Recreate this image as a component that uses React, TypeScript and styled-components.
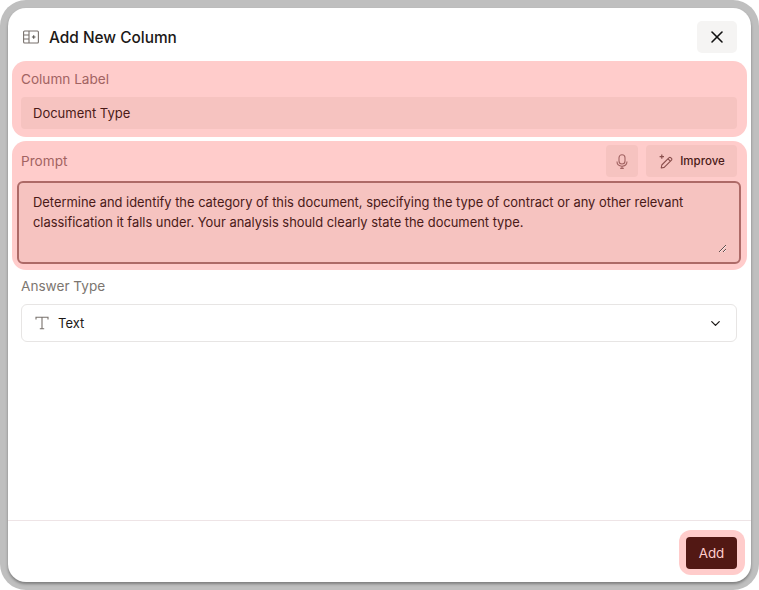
import React from "react";
import styled, { createGlobalStyle } from "styled-components";
import { X, ChevronDown } from "lucide-react";

const Global = createGlobalStyle`
  html, body { margin: 0; padding: 0; background: #fff; }
  * { box-sizing: border-box; }
  body { font-family: Inter, "Liberation Sans", sans-serif; }
`;

const Frame = styled.div`
  width: 759px;
  height: 590px;
  padding: 8px;
  border-radius: 26px;
  background: #bfbfbf;
`;

const Dialog = styled.div`
  height: 574px;
  background: #fff;
  border-radius: 18px;
  display: flex;
  flex-direction: column;
  box-shadow: 0 2px 3px rgba(0, 0, 0, 0.35);
`;

const Header = styled.header`
  height: 53px;
  padding: 13px 14px 0 15px;
  display: flex;
  align-items: flex-start;
  justify-content: space-between;
`;

const Title = styled.div`
  display: flex;
  align-items: center;
  gap: 10px;
  height: 32px;
  font-size: 15.4px;
  font-weight: 500;
  color: #1c1917;
`;

const CloseButton = styled.button`
  width: 40px;
  height: 32px;
  border: 0;
  border-radius: 5px;
  background: #f5f4f3;
  color: #111;
  display: flex;
  align-items: center;
  justify-content: center;
  padding: 0;
`;

const Body = styled.div`
  flex: 1;
  padding: 0 4px;
  display: flex;
  flex-direction: column;
  gap: 4px;
`;

const Highlight = styled.section`
  background: #ffcccb;
  border-radius: 14px;
  padding: 0 10px 0 9px;
  display: flex;
  flex-direction: column;
`;

const LabelSection = styled(Highlight)`
  height: 76px;
`;

const PromptSection = styled(Highlight)`
  height: 129px;
  padding: 4px 6px 0 5px;
`;

const Label = styled.label<{ $onHighlight?: boolean }>`
  display: block;
  font-size: 13.6px;
  line-height: 18px;
  color: ${(p) => (p.$onHighlight ? "#a26362" : "#7c7670")};
`;

const LabelRow = styled.div`
  height: 36px;
  display: flex;
  align-items: center;
`;

const TextInput = styled.input`
  height: 32px;
  width: 100%;
  border: 0;
  border-radius: 4px;
  background: #f6c3c0;
  padding: 0 12px;
  font: 400 13px Inter, sans-serif;
  color: #4a1a18;
  outline: none;
`;

const PromptHead = styled.div`
  height: 32px;
  padding: 0 4px 0 4px;
  display: flex;
  align-items: center;
  gap: 8px;
  margin-bottom: 4px;
`;

const Spacer = styled.div`
  flex: 1;
`;

const ToolButton = styled.button<{ $wide?: boolean }>`
  height: 32px;
  width: ${(p) => (p.$wide ? "91px" : "32px")};
  border: 0;
  border-radius: 4px;
  background: #f6c3c0;
  color: #4a1a18;
  padding: ${(p) => (p.$wide ? "0 0 0 1px" : "0")};
  display: flex;
  align-items: center;
  justify-content: center;
  gap: 6px;
  font: 500 11.5px Inter, sans-serif;
`;

const PromptBox = styled.div`
  height: 83px;
  border: 2px solid #ad6a67;
  border-radius: 6px;
  background: #f6c3c0;
  display: flex;
`;

const PromptArea = styled.textarea`
  flex: 1;
  margin: 10px 12px 9px 14px;
  border: 0;
  padding: 0;
  background: transparent;
  font: 400 12.9px/20px Inter, sans-serif;
  color: #4a1a18;
  outline: none;
  resize: vertical;
`;

const AnswerField = styled.div`
  padding: 3px 10px 0 9px;
  display: flex;
  flex-direction: column;
  gap: 9px;
`;

const SelectBox = styled.button`
  height: 38px;
  width: 100%;
  border: 1px solid #e7e5e4;
  border-radius: 6px;
  background: #fff;
  padding: 0 13px;
  display: flex;
  align-items: center;
  gap: 9px;
  font: 400 13px Inter, sans-serif;
  color: #1c1917;
  text-align: left;
`;

const SelectText = styled.span`
  flex: 1;
`;

const Footer = styled.footer`
  height: 62px;
  border-top: 1px solid #eee4e6;
  padding: 9px 6px 0 0;
  display: flex;
  justify-content: flex-end;
  align-items: flex-start;
`;

const AddHalo = styled.div`
  background: #ffcccb;
  border-radius: 12px;
  padding: 7px 8px 6px 7px;
`;

const AddButton = styled.button`
  display: block;
  width: 51px;
  height: 32px;
  border: 0;
  border-radius: 4px;
  background: #521814;
  color: #ffcccb;
  font: 400 13.4px Inter, sans-serif;
  padding: 0;
`;

const AddColumnIcon = () => (
  <svg width="16" height="14" viewBox="0 0 16 14" fill="none" stroke="#78716c" strokeWidth="1.1">
    <rect x="0.6" y="1" width="14.8" height="12" rx="1" />
    <path d="M6 1v12M0.6 5h5.4M0.6 9h5.4" />
    <path d="M10.7 5.2v3.6M8.9 7h3.6" stroke="#57534e" />
  </svg>
);

const MicIcon = () => (
  <svg width="12" height="15" viewBox="0 0 12 15" fill="none" stroke="#a26362" strokeWidth="1.1">
    <rect x="3" y="0.8" width="6" height="9.2" rx="3" />
    <path d="M1 7.6c0 3 2.2 4.6 5 4.6s5-1.6 5-4.6M6 12.2v2.2M4.2 14.4h3.6" />
  </svg>
);

const WandIcon = () => (
  <svg width="15" height="15" viewBox="0 0 15 15" fill="none" stroke="#8a4f4d" strokeWidth="1.1" strokeLinejoin="round">
    <path d="M2.2 14l.6-3 7.3-7.3a1.1 1.1 0 0 1 1.6 0l.8.8a1.1 1.1 0 0 1 0 1.6L5.2 13.4z" />
    <path d="M9 4.8l2.4 2.4" />
    <path d="M2.8.4v4.4M.6 2.6h4.4" strokeWidth="1.2" />
  </svg>
);

const SerifT = () => (
  <svg width="14" height="14" viewBox="0 0 14 14" fill="none" stroke="#78716c" strokeWidth="1.1">
    <path d="M1 3.4V1.2h12v2.2M7 1.2v11.6M4.8 12.8h4.4" />
  </svg>
);

export default function App() {
  return (
    <>
      <Global />
      <Frame>
        <Dialog>
          <Header>
            <Title>
              <AddColumnIcon />
              Add New Column
            </Title>
            <CloseButton aria-label="Close">
              <X size={20} strokeWidth={1.9} />
            </CloseButton>
          </Header>
          <Body>
            <LabelSection>
              <LabelRow>
                <Label $onHighlight>Column Label</Label>
              </LabelRow>
              <TextInput defaultValue="Document Type" />
            </LabelSection>
            <PromptSection>
              <PromptHead>
                <Label $onHighlight>Prompt</Label>
                <Spacer />
                <ToolButton aria-label="Record">
                  <MicIcon />
                </ToolButton>
                <ToolButton $wide>
                  <WandIcon />
                  Improve
                </ToolButton>
              </PromptHead>
              <PromptBox>
                <PromptArea defaultValue="Determine and identify the category of this document, specifying the type of contract or any other relevant classification it falls under. Your analysis should clearly state the document type." />
              </PromptBox>
            </PromptSection>
            <AnswerField>
              <Label>Answer Type</Label>
              <SelectBox>
                <SerifT />
                <SelectText>Text</SelectText>
                <ChevronDown size={15} strokeWidth={2} color="#1c1917" />
              </SelectBox>
            </AnswerField>
          </Body>
          <Footer>
            <AddHalo>
              <AddButton>Add</AddButton>
            </AddHalo>
          </Footer>
        </Dialog>
      </Frame>
    </>
  );
}
